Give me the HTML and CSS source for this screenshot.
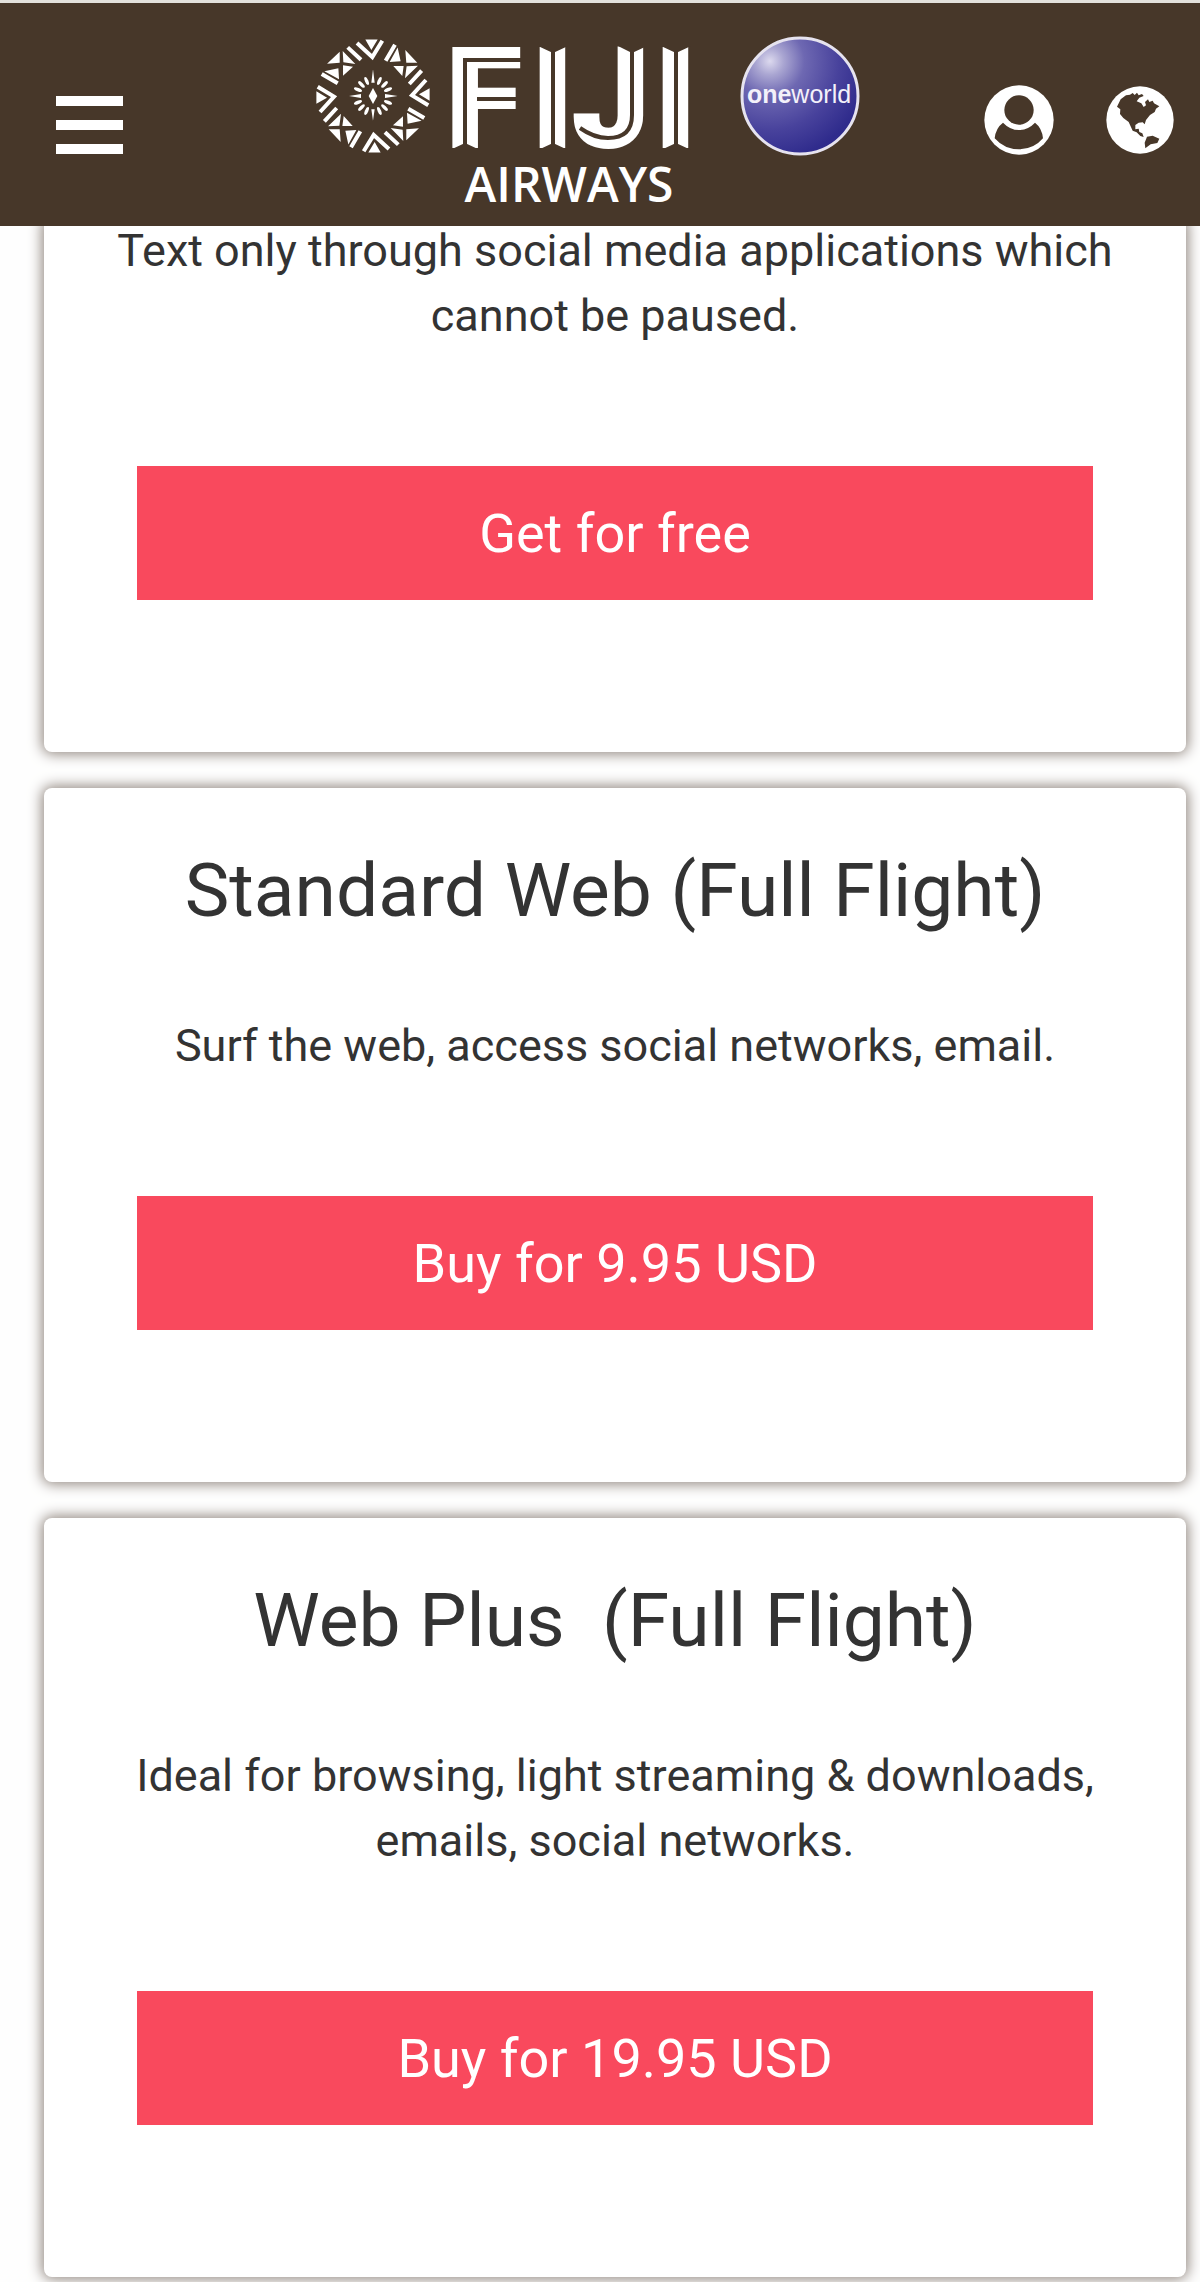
FILE: index.html
```html
<!DOCTYPE html>
<html lang="en">
<head>
    <meta charset="UTF-8">
    <meta name="viewport" content="width=device-width, initial-scale=1.0">
    <title>Fiji Airways Wi-Fi</title>
    <link rel="stylesheet" href="styles.css">
</head>
<body>
    <header class="header">
        <button class="menu-button" type="button" aria-label="Menu">
            <span></span>
            <span></span>
            <span></span>
        </button>

        <svg class="logo" viewBox="237 3 633 223" role="img" aria-label="Fiji Airways, oneworld">
            <defs>
                <radialGradient id="ball" cx="0.24" cy="0.2" r="0.85">
                    <stop offset="0" stop-color="#dcd9ee"/>
                    <stop offset="0.14" stop-color="#aaa6d2"/>
                    <stop offset="0.35" stop-color="#6e68b2"/>
                    <stop offset="0.7" stop-color="#48429c"/>
                    <stop offset="1" stop-color="#2f2b8c"/>
                </radialGradient>
                <!-- one quarter of the emblem ring -->
                <g id="quarter">
                    <path fill="#fff" d="M-23-170H14L-5-138ZM-100-133L-138-97L-100-100ZM-91-135L-53-96L-89-101ZM-146-74L-104-83L-102-50ZM-90-92L-60-88L-90-61Z"/>
                    <path fill="none" stroke="#fff" stroke-width="12" d="M-48-159L-2-117L28-166M-76-146L-36-109M66-154L38-106"/>
                </g>
                <ellipse id="ray" cx="0" cy="-49" rx="5" ry="13"/>
            </defs>

            <!-- emblem -->
            <g transform="translate(373 96) scale(0.333)">
                <use href="#quarter"/>
                <use href="#quarter" transform="rotate(90)"/>
                <use href="#quarter" transform="rotate(180)"/>
                <use href="#quarter" transform="rotate(270)"/>
                <g fill="#fff">
                    <path d="M0-24L13 0L0 24L-13 0Z"/>
                    <path d="M-5-40L0-80L5-40ZM-5 40L0 74L5 40ZM-36-6L-72 0L-36 6ZM36-6L74 0L36 6Z"/>
                    <use href="#ray" transform="rotate(23)"/>
                    <use href="#ray" transform="rotate(45)"/>
                    <use href="#ray" transform="rotate(67)"/>
                    <use href="#ray" transform="rotate(113)"/>
                    <use href="#ray" transform="rotate(135)"/>
                    <use href="#ray" transform="rotate(157)"/>
                    <use href="#ray" transform="rotate(203)"/>
                    <use href="#ray" transform="rotate(225)"/>
                    <use href="#ray" transform="rotate(247)"/>
                    <use href="#ray" transform="rotate(293)"/>
                    <use href="#ray" transform="rotate(315)"/>
                    <use href="#ray" transform="rotate(337)"/>
                </g>
            </g>

            <!-- wordmark with its inline stripes and notched ends -->
            <text class="logo-name" x="447 533 574 656" y="145">FIJI</text>
            <path class="logo-stripe" d="M465 150V60H526M477 99H516M553 46V150M632 46V115Q632 138 608 138Q594 138 580 128M676 46V150"/>
            <path fill="#473729" d="M538 46L553 53L568 46ZM618 46L632 53L647 46ZM661 46L676 53L691 46ZM450 150L465 143L480 150ZM538 150L553 143L568 150ZM661 150L676 143L691 150Z"/>
            <text class="logo-sub" x="569" y="202">AIRWAYS</text>

            <!-- oneworld badge -->
            <circle cx="800" cy="96" r="58" fill="url(#ball)" stroke="#e6e3ef" stroke-width="3"/>
            <text class="logo-oneworld" x="799" y="103"><tspan font-weight="bold">one</tspan>world</text>
        </svg>

        <nav class="actions">
            <button class="icon-button" type="button" aria-label="Account">
                <svg viewBox="72 75 210 210">
                    <circle cx="177" cy="180" r="104" fill="#fff"/>
                    <circle cx="177" cy="150" r="44" fill="#473729"/>
                    <path fill="#473729" d="M129 188Q107 204 104 235Q133 268 177 268Q221 268 249 235Q246 204 225 188Q204 210 177 210Q150 210 129 188Z"/>
                </svg>
            </button>
            <button class="icon-button" type="button" aria-label="Language">
                <svg viewBox="437 75 210 210">
                    <circle cx="542" cy="180" r="101" fill="#fff"/>
                    <path fill="#473729" d="M473 140L484 118L500 106L512 104L520 99L526 105L533 98L538 106L548 102L553 108L540 113L532 124L546 130L553 141L560 136L557 126L566 118L570 126L580 122L584 130L600 139L590 146L586 156L572 165L560 180L556 193L550 187L538 188L528 195L528 208L538 206L540 216L549 220L553 231L543 228L532 217L520 212L508 186L492 174L482 162L483 148Z"/>
                    <path fill="#473729" d="M563 230L580 227L600 236L594 249L574 253L558 265L556 248Z"/>
                </svg>
            </button>
        </nav>
    </header>

    <main class="plans">
        <section class="card card-first">
            <p>Text only through social media applications which cannot be paused.</p>
            <button class="buy-button" type="button">Get for free</button>
        </section>

        <section class="card">
            <h2>Standard Web (Full Flight)</h2>
            <p>Surf the web, access social networks, email.</p>
            <button class="buy-button" type="button">Buy for 9.95 USD</button>
        </section>

        <section class="card">
            <h2>Web Plus&nbsp; (Full Flight)</h2>
            <p>Ideal for browsing, light streaming &amp; downloads, emails, social networks.</p>
            <button class="buy-button" type="button">Buy for 19.95 USD</button>
        </section>
    </main>
</body>
</html>
```
FILE: styles.css
```css
* {
    box-sizing: border-box;
}
body {
    margin: 0;
    font-family: Roboto, "Liberation Sans", sans-serif;
    color: #333;
    background-color: #fefefe;
}
button {
    padding: 0;
    border: none;
    background: none;
    font-family: inherit;
    cursor: pointer;
}

/* header */
.header {
    position: fixed;
    top: 0;
    left: 0;
    right: 0;
    z-index: 10;
    display: flex;
    justify-content: space-between;
    align-items: center;
    padding: 0 25px 0 56px;
    border-top: 3px solid #e3e1dc;
    background-color: #473729;
}
.menu-button {
    display: flex;
    flex-direction: column;
    gap: 14px;
    width: 67px;
    margin-top: 20px;
}
.menu-button span {
    height: 10px;
    background-color: #fff;
}
.logo {
    display: block;
    width: 633px;
    height: 223px;
}
.logo-name {
    font-family: Roboto, sans-serif;
    font-size: 133px;
    font-weight: bold;
    fill: #fff;
    stroke: #fff;
    stroke-width: 6px;
}
.logo-stripe {
    fill: none;
    stroke: #473729;
    stroke-width: 4px;
}
.logo-sub {
    font-family: "Open Sans", sans-serif;
    font-size: 48px;
    font-weight: 600;
    text-anchor: middle;
    fill: #fff;
}
.logo-oneworld {
    font-family: "Liberation Sans", sans-serif;
    font-size: 25px;
    text-anchor: middle;
    fill: #f3f1fa;
}
.actions {
    display: flex;
    gap: 51px;
    margin-top: 10px;
}
.icon-button svg {
    display: block;
    width: 70px;
    height: 70px;
}

/* plans */
.plans {
    display: flex;
    flex-direction: column;
    gap: 36px;
    padding: 218px 14px 5px 44px;
}
.card {
    padding: 56px 48px 152px;
    border-radius: 8px;
    background-color: #fff;
    box-shadow: 0 0 14px 2px #8f857d;
    text-align: center;
}
.card-first {
    padding-top: 0;
}
.card h2 {
    margin: 0 0 77px;
    font-size: 75px;
    font-weight: normal;
    line-height: 92px;
}
.card p {
    margin: 0 0 118px;
    font-size: 45px;
    line-height: 65px;
}
.buy-button {
    display: block;
    width: calc(100% - 90px);
    height: 134px;
    margin: 0 auto;
    background-color: #f9495d;
    color: #fff;
    font-size: 54px;
}
```
